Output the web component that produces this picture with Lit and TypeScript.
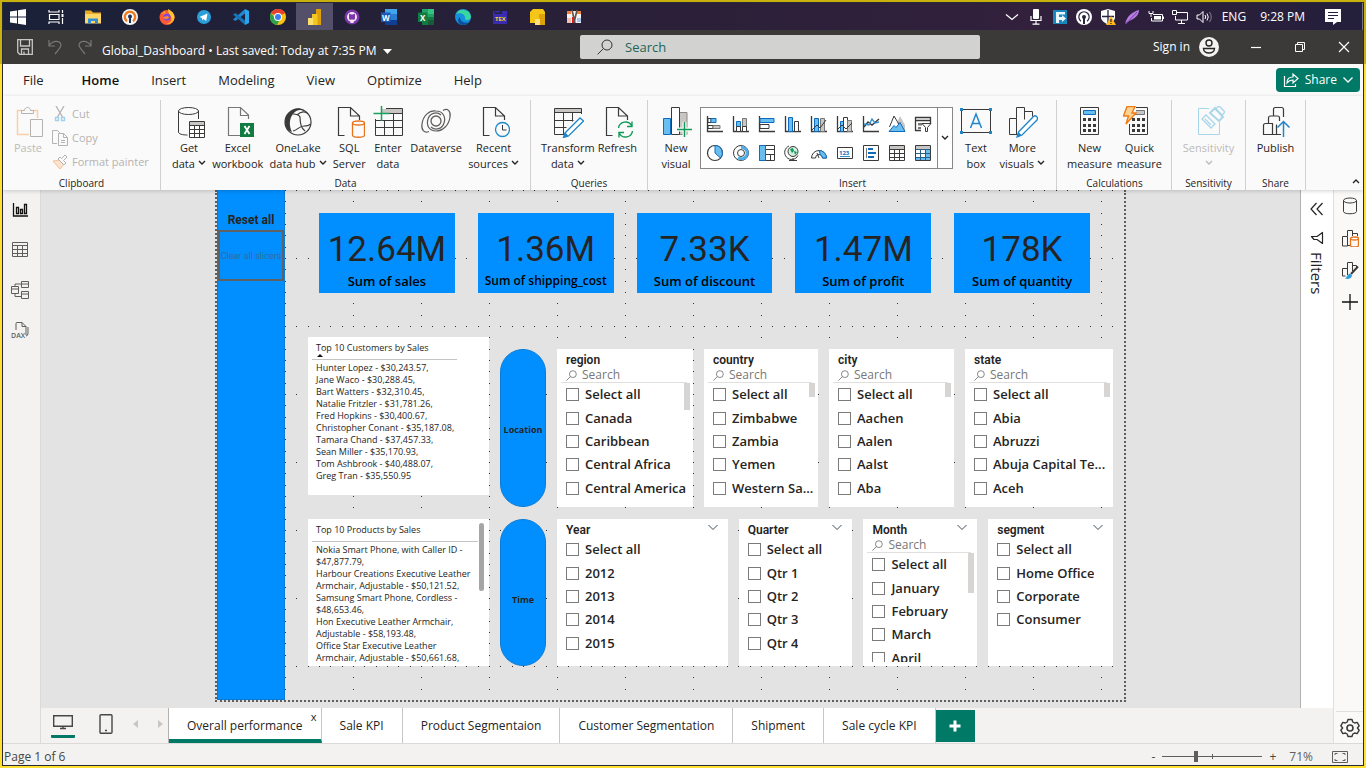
import { LitElement, html, svg, css, nothing } from "lit";
import { customElement, property } from "lit/decorators.js";
import { classMap } from "lit/directives/class-map.js";

const icon = (size: number, body: unknown) =>
  html`<svg width=${size} height=${size} viewBox="0 0 ${size} ${size}" fill="none" aria-hidden="true">${body}</svg>`;

const K = "#3b3a39";
const G = "#797775";
const B = "#1f86c9";

/* Shared shapes */
const chevron = html`<svg width="8" height="6" viewBox="0 0 8 6" fill="none" aria-hidden="true"><path d="M1 1l3 3 3-3" stroke="currentColor" stroke-width="1.4"/></svg>`;
const magnifier = (s: number) => html`<svg width=${s} height=${s} viewBox="0 0 16 16" fill="none" aria-hidden="true"><circle cx="10" cy="6" r="5" stroke="currentColor"/><path d="M6.4 9.6L.6 15.4" stroke="currentColor"/></svg>`;
const sheet = svg`<path d="M11.500 29.500H5.500V1.500H17.500L26.500 10V14M17.500 1.500V10H26.500" stroke=${K} stroke-width="1.2"/>`;

/* Taskbar */
const taskIcons = [
  { name: "Task View", art: svg`<path d="M1 1v2h10V1M1 15v-2h10v2M1.500 5.500h9.500v5H1.500zM14.500 1v3M14.500 9v6" stroke="#fff" stroke-width="1.2"/><path d="M13.500 5h2v3h-2z" fill="#fff"/>` },
  { name: "File Explorer", art: svg`<path d="M0 1.500h6l2 2h8V14H0z" fill="#e9a825"/><path d="M0 5h16v9.500H0z" fill="#ffd767"/><path d="M3 14.500V9.500h10v5h-3V12H6v2.500z" fill="#2f8fd8"/>` },
  { name: "OpenVPN", art: svg`<circle cx="8" cy="8" r="8" fill="#f5f5f5"/><path d="M5 12.200A5.200 5.200 0 1 1 11 12.200" stroke="#ee7d22" stroke-width="2.400"/><circle cx="8" cy="7.500" r="2" fill="#1d3159"/><path d="M7 8h2v6H7z" fill="#1d3159"/>` },
  { name: "Firefox", art: svg`<circle cx="8" cy="8.500" r="7.500" fill="#ff5a36"/><path d="M9 0c4 2 7 5 6.500 9-1 4-4 6-8 6 4-1 5-3 5-5 0-3-2-4-3-6z" fill="#ffc42e"/><path d="M1 4l2 1 2-3 3 3z" fill="#ff9a2c"/><circle cx="8" cy="8" r="3.500" fill="#7a4be0"/><path d="M4 8c2 0 3-1 5-1l1 2c-2 1-4 2-6-1z" fill="#ff8a2a"/>` },
  { name: "Telegram", art: svg`<circle cx="8" cy="8" r="7" fill="#29a0dc"/><path d="M3.500 8l8-3.500-1.300 7.500-2.700-2-1.300 1.300-.3-2.300z" fill="#fff"/>` },
  { name: "VS Code", art: svg`<path d="M12 0l4 2v12l-4 2z" fill="#2ba4ee"/><path d="M12 0v4.500L2.500 12 0 10.500z" fill="#1f86cf"/><path d="M12 16v-4.500L2.500 4 0 5.500z" fill="#1673b8"/>` },
  { name: "Chrome", art: svg`<circle cx="8" cy="8" r="8" fill="#fbbf12"/><path d="M8 8L1 4a8 8 0 0 1 14 0z" fill="#e6402f"/><path d="M1 4a8 8 0 0 0 6 12l3.500-6.500L5 9z" fill="#2da34c"/><circle cx="8" cy="8" r="4" fill="#fff"/><circle cx="8" cy="8" r="3" fill="#3a7ff0"/>` },
  { name: "Power BI", active: true, art: svg`<path d="M9 0h5v16H9z" fill="#e0a008"/><path d="M5 5h5.500v11H5z" fill="#f3c623"/><path d="M1 9h5v7H1z" fill="#fbdf6a"/>` },
  { name: "GitHub Desktop", art: svg`<circle cx="8" cy="8" r="7.500" fill="#7d35a8"/><circle cx="8" cy="8" r="5" fill="#f1e8f6"/><path d="M5 4.500l2 1h2l2-1v5c0 2-6 2-6 0z" fill="#7d35a8"/><path d="M6.500 10.500h3V14h-3z" fill="#f1e8f6"/>` },
  { name: "Word", art: svg`<path d="M4 0h12v16H4z" fill="#2b7cd3"/><path d="M4 0h12v5H4z" fill="#41a5ee"/><path d="M4 11h12v5H4z" fill="#103f91"/><path d="M0 3.500h9.500v9.500H0z" fill="#185abd"/><text x="1" y="11.500" font-size="8" font-weight="700" fill="#fff">W</text>` },
  { name: "Excel", art: svg`<path d="M4 0h12v16H4z" fill="#21a366"/><path d="M10 0h6v5h-6z" fill="#33c481"/><path d="M4 8h12v8H4z" fill="#107c41"/><path d="M10 11h6v5h-6z" fill="#185c37"/><path d="M0 3.500h9.500v9.500H0z" fill="#107c41"/><text x="2" y="11.500" font-size="8" font-weight="700" fill="#fff">X</text>` },
  { name: "Edge", art: svg`<circle cx="8" cy="8" r="8" fill="#1391dc"/><path d="M1 5a8 8 0 0 1 15 3c0 3-5 4-6 2 1-5-5-7-9-5z" fill="#3bd5a0"/><path d="M5 8c0 5 5 6.500 9 5a8 8 0 0 1-6 3C4 16 1 11 5 8z" fill="#0a4fa0"/>` },
  { name: "TeX", art: svg`<path d="M1 2h14v13H1z" fill="#3b2bb0"/><path d="M2 2l4 2 4-3v4H3z" fill="#20263a"/><text x="3" y="12" font-size="6" font-weight="700" fill="#f0d030">TEX</text>` },
  { name: "Report builder", art: svg`<path d="M4 0h10l2 3v11H1V3z" fill="#f5c518"/><path d="M10 5h6v11h-6z" fill="#dca20a"/><path d="M6 10h5v6H6z" fill="#ffe07a"/>` },
  { name: "Monitor", art: svg`<path d="M1 2h14v12H1z" fill="#f4f4f4"/><path d="M1 2h4v3H1z" fill="#ef7f3a"/><path d="M1 9h4v5H1z" fill="#f0c0b0"/><path d="M11 2h4v3h-4z" fill="#ef7f3a"/><path d="M11 9h4v4h-4z" fill="#a9c6ea"/><path d="M6 1l3 13M11 1L8 14" stroke="#5b5148" stroke-width="1.600"/><path d="M7 8v6" stroke="#e02020" stroke-width="2"/>` },
];

const trayIcons = [
  { name: "Show hidden icons", art: svg`<path d="M2 5.500l6 5 6-5" stroke="#fff" stroke-width="1.300"/>` },
  { name: "Microphone", art: svg`<rect x="5" y="0" width="6" height="10" rx="1" fill="#fff"/><path d="M3 7v4.500h10V7M8 11.500V15M4.500 15.200h7" stroke="#fff" stroke-width="1.200"/>` },
  { name: "Sync", art: svg`<path d="M1 1h14v14H1z" fill="#1787bd"/><path d="M4 3h9v2.500H7V8h3V6l4 3.500-4 3.500v-2H7v3H4z" fill="#e9f6fb"/>` },
  { name: "VPN", art: svg`<circle cx="8" cy="8" r="8" fill="#fff"/><path d="M5 12.200A5.200 5.200 0 1 1 11 12.200" stroke="#2a2340" stroke-width="1.200"/><circle cx="8" cy="8" r="2" fill="#2a2340"/><path d="M7 8.500h2V15H7z" fill="#2a2340"/>` },
  { name: "Security", art: svg`<path d="M8 0l7 2v6c0 4-4 6-7 7.500C5 14 1 12 1 8V2z" fill="#fff"/><path d="M8 1v13M2 7.500h12" stroke="#2a2340" stroke-width="1.300"/><path d="M11 7l5 9H6z" fill="#ffb71b"/><path d="M11 10v3M11 14v1" stroke="#2a2340" stroke-width="1.200"/>` },
  { name: "Feather", art: svg`<path d="M1 15C3 7 8 3 15 1c0 5-4 9-12 12z" fill="#b57be0"/><path d="M2 15L13 3" stroke="#7341a8"/>` },
  { name: "Battery", art: svg`<path d="M5 5.500h9.500v6.500H3.500V9" stroke="#fff"/><path d="M6 7h7v3.500H6zM15 7.500h1V10h-1z" fill="#fff"/><path d="M1 2v2.500h4V2M3 4.500V8" stroke="#fff"/>` },
  { name: "Network", art: svg`<path d="M5 3.500h10.500v7.500H3.500V7M9.500 11v3.500M6 14.500h7" stroke="#fff"/><path d="M.5 1.500h4v4h-4z" stroke="#fff"/>` },
  { name: "Volume", art: svg`<path d="M1 6h2.500L7 2.500v11L3.500 10H1z" stroke="#fff"/><path d="M9 6q1.500 2 0 4M11 4.500q2.500 3.500 0 7" stroke="#fff"/><path d="M13.500 3q3.500 5 0 10" stroke="#8a8296"/>` },
];

/* Ribbon artwork, drawn on 32px squares */
const art = {
  paste: svg`<path d="M25.500 12V4.500H21M10 4.500H5.500V28.500H17" stroke="#f7cfa8" stroke-width="1.500"/><path d="M9.500 7.500v-3h3c0-4 6-4 6 0h3v3z" stroke="#b5b3b1"/><path d="M18.500 13.500h12v17h-12z" fill="#fafafa" stroke="#b5b3b1"/>`,
  getData: svg`<ellipse cx="15.500" cy="5" rx="10" ry="3.500" stroke=${K}/><path d="M5.500 5v21c0 2 4 3 9 3M25.500 5v8" stroke=${K}/><path d="M16.500 15.500h15v16h-15z" fill="#fff" stroke=${K}/><path d="M17 16h14v3H17z" fill="#c8c6c4"/><path d="M16.500 19.500h15M16.500 23.500h15M16.500 27.500h15M21.500 19.500v12M26.500 19.500v12" stroke=${K}/>`,
  excel: svg`<path d="M26.500 13V9L18.500 1.500H6.500v28h12M18.500 1.500V9.500h8" stroke=${G} stroke-width="1.200"/><path d="M18 17h14v14H18z" fill="#107c41"/><path d="M22.500 20l5 8M27.500 20l-5 8" stroke="#fff" stroke-width="1.800"/>`,
  onelake: svg`<circle cx="16" cy="16" r="13" stroke=${K} stroke-width="1.200"/><path d="M10 4.500C13 1.500 20 1.500 23 5c-5-2-9-1-12 3-4 5-4 12-1 18C3 24 1 16 5 9c1-2 3-3 5-4.500z" fill=${K}/><path d="M11 8c3 0 6 1 7 3 0 8 2 12 5 14M15 9c4-4 9-4 11-1M11 25c5-1 6-5 11-5 3 0 5 0 6-2" stroke=${K} stroke-width="1.200"/>`,
  sql: svg`${sheet}<path d="M17 15v15h15V15z" fill="#fafafa"/><ellipse cx="25.500" cy="17" rx="6" ry="2" stroke="#e8731c" stroke-width="1.300"/><path d="M19.500 17v12c0 3 12 3 12 0V17" stroke="#e8731c" stroke-width="1.300"/>`,
  enter: svg`<path d="M10 3h20v4H10z" fill="#c8c6c4"/><path d="M14 2.500h16.500v27h-27V13M14 7.500h16M3.500 14.500h27M3.500 21.500h27M12.500 14v15M21.500 7v22" stroke=${K}/><path d="M9.500 0v15M1.500 7.500h16" stroke="#17a15c" stroke-width="1.500"/>`,
  dataverse: svg`<path d="M23 4.500c5-3 8 1 7 6.500-1 8-7 14-14 14-7 0-10-6-8-12" stroke="#605e5c" stroke-width="1.200"/><path d="M9 25.500c-5 2-8-2-7-7.500 1-8 7-14 14-13 7 0 10 6 8 12" stroke="#605e5c" stroke-width="1.200"/><path d="M24 17a8 8 0 0 1-13 4M8 13a8 8 0 0 1 13-4" stroke="#605e5c" stroke-width="1.200"/><circle cx="16" cy="15" r="5" stroke="#605e5c" stroke-width="1.300"/>`,
  recent: svg`${sheet}<circle cx="24.500" cy="23.500" r="7" fill="#fafafa" stroke=${B} stroke-width="1.300"/><path d="M24.500 19v5h4" stroke=${K}/>`,
  transform: svg`<path d="M2 3h27v3H2z" fill="#c8c6c4"/><path d="M29.500 8V2.500h-27v26H12M2.500 6.500h27M2.500 14.500h19M2.500 21.500h12M11.500 6.500v22M20.500 6.500v9" stroke=${K}/><path d="M13 27l15-15 3.500 3-15 15-5 1.500z" fill="#fff" stroke=${B} stroke-width="1.300"/><path d="M13 26l3.500 4-5 1.500z" fill=${B}/>`,
  refresh: svg`${sheet}<path d="M16 16h16v16H16z" fill="#fafafa"/><path d="M17.500 22a7 7 0 0 1 13-2.500M31 15.500v5h-5M31.500 25a7 7 0 0 1-13 2.500M18 31.500v-5h5" stroke="#109a58" stroke-width="1.400"/>`,
  newVisual: svg`<path d="M3.500 12.500h7v16h-7z" fill="#69bef0" stroke="#0f6cbd"/><path d="M19 6.500h8v22h-8z" fill="#c8c6c4" stroke="#8a8886"/><path d="M11.500 1.500h8v27h-8z" fill="#fff" stroke=${K}/><path d="M24.500 16v15M17 23.500h15" stroke="#fafafa" stroke-width="4"/><path d="M24.500 16v15M17 23.500h15" stroke="#109a58" stroke-width="1.500"/>`,
  textBox: svg`<path d="M1.500 3.500h29v23h-29z" stroke=${K}/><path d="M0 2h3v3H0zM29 2h3v3h-3zM0 25h3v3H0zM29 25h3v3h-3z" fill=${B}/><path d="M10.500 22L16 8l5.500 14M12.500 17.500h7" stroke=${B} stroke-width="1.500"/>`,
  moreVisuals: svg`<path d="M3.500 28.500v-16h7v-11h8v12M10.500 12.500v16M3.500 28.500h9M18.500 5.500h8v5" stroke=${K}/><path d="M12.500 26l15-15.500c2-2 5 1 3.500 3.500L16 29l-5 2z" fill="#fff" stroke=${B} stroke-width="1.300"/><path d="M12.500 26l3.500 3.500-5 1.500z" fill=${B}/>`,
  calc: svg`<path d="M6.500 1.500h18v27h-18z" stroke=${K}/><path d="M9.500 4.500h12v4h-12z" fill="#69bef0" stroke="#0f6cbd"/><path d="M9 13.500h3m2 0h3m2 0h3M9 19.500h3m2 0h3m2 0h3M9 24.500h3m2 0h3m2 0h3" stroke=${K} stroke-width="3"/>`,
  quick: svg`<path d="M13 1.500h11.500v27H6.500V18" stroke=${K}/><path d="M13 4.500h8.500v4H12" stroke=${G} fill="#c8c6c4"/><path d="M9 13.500h3m2 0h3m2 0h3M9 19.500h3m2 0h3m2 0h3M9 24.500h3m2 0h3m2 0h3" stroke=${K} stroke-width="3"/><path d="M4 .5h8L9 7h4L3 18l2.500-8H.500z" fill="#ffd394" stroke="#ef7b16" stroke-width="1.400"/>`,
  sensitivity: svg`<path d="M16 2.500H5.500v26h21V16" stroke="#a9d6ea"/><path d="M9 13l4-4 9 9-4 4zM12 13l6 6" stroke="#a9d6ea" stroke-width="1.300"/><path d="M17 7l5-5 8 9-4 4z" stroke="#a9d6ea" stroke-width="2"/><path d="M22 3l4-3 6 6-3 3z" stroke="#a9d6ea" stroke-width="1.300"/>`,
  publish: svg`<path d="M4.500 28.500v-9q0-2 2-2h7v11zM13.500 28.500h4v-10M9.500 17v-5q0-2 2-2h7q2 0 2 2v3M14.500 10V3.500q0-2 2-2h6q2 0 2 2V11M18 28.500h4" stroke=${K} stroke-width="1.200"/><path d="M24.500 31V16M18.500 21.500l6-6 6 6" stroke=${B} stroke-width="1.500"/>`,
};

const axes = svg`<path d="M1.500 1v15.500H17" stroke=${K} stroke-width="1.300"/>`;
const gallery = [
  { name: "Stacked bar chart", art: svg`${axes}<path d="M2 3.500h3v4H2z" fill="#fff" stroke=${K}/><path d="M5 3.500h5v4H5z" fill="#69bef0" stroke="#0f6cbd"/><path d="M2 10.500h5v3H2z" stroke=${K}/><path d="M7 10.500h7v3H7z" fill="#c8c6c4" stroke=${G}/>` },
  { name: "Stacked column chart", art: svg`${axes}<path d="M4.500 6.500h4v9h-4z" fill="#69bef0" stroke="#0f6cbd"/><path d="M10.500 3.500h4v12h-4z" fill="#c8c6c4" stroke=${G}/><path d="M4.500 11.500h4v5h-4zM10.500 11.500h4v5h-4z" fill="#fff" stroke=${K}/>` },
  { name: "Clustered bar chart", art: svg`${axes}<path d="M2 3.500h14v4H2z" fill="#69bef0" stroke="#0f6cbd"/><path d="M2 9.500h9v4H2z" fill="#fff" stroke=${K}/>` },
  { name: "Clustered column chart", art: svg`${axes}<path d="M4.500 2.500h4v14h-4z" fill="#69bef0" stroke="#0f6cbd"/><path d="M10.500 6.500h4v10h-4z" fill="#fff" stroke=${K}/>` },
  { name: "Line and stacked column chart", art: svg`${axes}<path d="M4.500 3.500h4v13h-4z" fill="#69bef0" stroke="#0f6cbd"/><path d="M10.500 3.500h4v13h-4z" fill="#c8c6c4" stroke=${G}/><path d="M2 15l5-5 3 3 6-8" stroke=${K}/>` },
  { name: "Line and clustered column chart", art: svg`${axes}<path d="M4.500 6.500h3v10h-3z" fill="#69bef0" stroke="#0f6cbd"/><path d="M7.500 2.500h4v14h-4z" fill="#fff" stroke=${K}/><path d="M11.500 5.500h4v11h-4z" fill="#c8c6c4" stroke=${G}/><path d="M2 14l4-4 4 4 6-6" stroke=${K}/>` },
  { name: "Line chart", art: svg`${axes}<path d="M2 12l4-5 4 3 7-6" stroke=${K} stroke-width="1.400"/><path d="M2 9l5 1 3-6 3 4 4-1" stroke="#2f8fd0" stroke-width="1.400"/>` },
  { name: "Area chart", art: svg`<path d="M9 8l3-7 5 9v6h-3z" fill="#c8c6c4"/><path d="M1.500 12L6 1l6 10" stroke=${K}/><path d="M1 16.500l5-6 2 2 4-5 5 9z" fill="#69bef0" stroke="#0f6cbd"/>` },
  { name: "Slicer", art: svg`<path d="M7 15.500H1.500v-13h15V8M1.500 5.500h15" stroke=${K} stroke-width="1.300"/><path d="M4 8h4v2.500H4zM4 12h3v2H4z" fill=${G}/><path d="M8 8.500h9l-3.500 4v4h-2v-4z" fill="#fff" stroke=${K}/>` },
  { name: "Pie chart", art: svg`<circle cx="9" cy="9" r="7.500" stroke=${K} stroke-width="1.200"/><path d="M9 9V1.500A7.500 7.500 0 0 1 14.500 14z" fill="#69bef0" stroke="#0f6cbd"/>` },
  { name: "Donut chart", art: svg`<circle cx="9" cy="9" r="7.500" stroke=${K}/><path d="M9 3.200a5.800 5.800 0 1 1-3 10.500" stroke="#4faee8" stroke-width="3"/><circle cx="9" cy="9" r="3.500" fill="#fff" stroke=${K}/>` },
  { name: "Treemap", art: svg`<path d="M1.500 1.500h15v15h-15z" fill="#fff" stroke=${K}/><path d="M1.500 1.500h6v15h-6z" fill="#69bef0" stroke="#0f6cbd"/><path d="M8 5.500h8M8 10.500h8M12.500 10v6" stroke=${K}/>` },
  { name: "Map", art: svg`<circle cx="9" cy="7.500" r="5" fill="#d6efe2" stroke=${K}/><path d="M6 5l3-1 1 3-2 2zM10 7l3 1-2 3z" fill="#109a58"/><path d="M5 2a7 7 0 1 0 9 9.500M9 14v2.500M5 16.500h8" stroke=${K}/>` },
  { name: "Gauge", art: svg`<path d="M1.500 14a7.500 7.500 0 0 1 15 0h-4a3.500 3.500 0 0 0-7 0z" fill="#fff" stroke=${K}/><path d="M9 6.500a7.500 7.500 0 0 1 7.500 7.500h-4a3.500 3.500 0 0 0-2-3z" fill="#69bef0" stroke="#0f6cbd"/><path d="M7 9l2 5" stroke=${K}/>` },
  { name: "Card", art: svg`<path d="M1.500 3.500h15v11h-15z" stroke=${K}/><path d="M4 12.500h10" stroke="#2f8fd0"/><text x="3" y="10.500" font-size="6" font-weight="700" fill="#0f6cbd">123</text>` },
  { name: "Multi-row card", art: svg`<path d="M1.500 1.500h15v15h-15z" stroke=${K}/><path d="M4.500 4v10" stroke=${G}/><path d="M6 5h5M6 9h8M6 13h6" stroke="#0f6cbd" stroke-width="2"/>` },
  { name: "Table", art: svg`<path d="M1.500 1.500h15v15h-15z" stroke=${K}/><path d="M2 2h14v3H2z" fill="#c8c6c4"/><path d="M1.500 5.500h15M1.500 9.500h15M1.500 13.500h15M6.500 5v11M11.500 5v11" stroke=${K}/>` },
  { name: "Matrix", art: svg`<path d="M1.500 1.500h15v15h-15z" stroke=${K}/><path d="M2 2h14v3H2z" fill="#c8c6c4"/><path d="M12 5h4v11h-4zM2 13h10v3H2z" fill="#69bef0"/><path d="M1.500 5.500h15M1.500 9.500h15M1.500 13.500h15M6.500 5v11M11.500 5v11" stroke="#2a5f85"/>` },
];

const railViews = [
  { name: "Report view", art: svg`<path d="M2.500 2v13H17M5.500 12.500v-6h2v6zM9.500 12.500v-4h2v4zM13.500 12.500v-9h2v9z" stroke="#111" stroke-width="1.300"/>` },
  { name: "Table view", art: svg`<path d="M1.500 1.500h15v14H1.500zM1.500 4.500h15M1.500 8.500h15M1.500 12.500h15M6.500 4.500v11M11.500 4.500v11" stroke="#605e5c"/>` },
  { name: "Model view", art: svg`<path d="M.5 5.500h7v7h-7zM.5 8h7M10.500 .5h7v6h-7zM10.500 3h7M10.500 10.500h7v7h-7zM10.500 13h7M4 5V3h6M4 13v2.500h6" stroke="#605e5c"/>` },
  { name: "DAX query view", art: svg`<path d="M5 9V2.500q0-1 1-1h5l4 4V14M11 1.500v4h4M17 6v6q0 3-2 3" stroke="#605e5c"/><text x="0" y="17" font-size="7" font-weight="600" fill="#605e5c">DAX</text>` },
];

const paneIcons = [
  { name: "Data", art: svg`<ellipse cx="9" cy="3.500" rx="6.500" ry="2.500" stroke=${K}/><path d="M2.500 3.500v11c0 3 13 3 13 0v-11" stroke=${K}/>` },
  { name: "Build visual", art: svg`<path d="M1.500 17V7.500h5V17zM6.500 7.500v-6h5V7M6.500 16.500h3M11.500 4.500h5V7" stroke=${K}/><ellipse cx="13.500" cy="9.500" rx="4" ry="1.500" fill="#fff" stroke="#e8731c" stroke-width="1.300"/><path d="M9.500 9.500v7c0 2 8 2 8 0v-7" stroke="#e8731c" stroke-width="1.300"/>` },
  { name: "Format visual", art: svg`<path d="M1.500 15V7.500h5M6.500 14v-12.500h5V10M11.500 4.500h4V6M1.500 15h3" stroke=${K}/><path d="M17 5.500L10 13" stroke=${K} stroke-width="2"/><path d="M4 17.500c2-1 2-4 5-5l2 2c0 3-4 4-7 3z" fill="#2f9fe0"/>` },
  { name: "Add pane", art: svg`<path d="M9 1v16M1 9h16" stroke="#111" stroke-width="1.300"/>` },
];

interface RibbonItem { lines: string[]; art: unknown; menu?: boolean; disabled?: boolean; }

const dataItems: RibbonItem[] = [
  { lines: ["Get", "data"], art: art.getData, menu: true },
  { lines: ["Excel", "workbook"], art: art.excel },
  { lines: ["OneLake", "data hub"], art: art.onelake, menu: true },
  { lines: ["SQL", "Server"], art: art.sql },
  { lines: ["Enter", "data"], art: art.enter },
  { lines: ["Dataverse"], art: art.dataverse },
  { lines: ["Recent", "sources"], art: art.recent, menu: true },
];
const queryItems: RibbonItem[] = [
  { lines: ["Transform", "data"], art: art.transform, menu: true },
  { lines: ["Refresh"], art: art.refresh },
];

const kpis = [
  ["12.64M", "Sum of sales"],
  ["1.36M", "Sum of shipping_cost"],
  ["7.33K", "Sum of discount"],
  ["1.47M", "Sum of profit"],
  ["178K", "Sum of quantity"],
];

const customers = [
  "Hunter Lopez - $30,243.57,", "Jane Waco - $30,288.45,", "Bart Watters - $32,310.45,",
  "Natalie Fritzler - $31,781.26,", "Fred Hopkins - $30,400.67,", "Christopher Conant - $35,187.08,",
  "Tamara Chand - $37,457.33,", "Sean Miller - $35,170.93,", "Tom Ashbrook - $40,488.07,",
  "Greg Tran - $35,550.95",
];
const products = [
  "Nokia Smart Phone, with Caller ID -", "$47,877.79,", "Harbour Creations Executive Leather",
  "Armchair, Adjustable - $50,121.52,", "Samsung Smart Phone, Cordless -", "$48,653.46,",
  "Hon Executive Leather Armchair,", "Adjustable - $58,193.48,", "Office Star Executive Leather",
  "Armchair, Adjustable - $50,661.68,",
];

const pageTabs = ["Overall performance", "Sale KPI", "Product Segmentaion", "Customer Segmentation", "Shipment", "Sale cycle KPI"];

@customElement("report-slicer")
export class ReportSlicer extends LitElement {
  @property() heading = "";
  @property({ type: Array }) values: string[] = [];
  @property({ type: Boolean }) searchable = false;
  @property({ type: Boolean }) collapsible = false;
  @property() thumb = "";

  static styles = css`
    :host { display: block; background: #fff; color: #252423; padding: 3px 3px 4px 4px; box-sizing: border-box; min-width: 0; overflow: hidden; }
    .card { display: flex; flex-direction: column; height: 100%; }
    .head { display: flex; justify-content: space-between; align-items: flex-start; height: 16px; padding: 0 7px 0 5px; }
    h3 { margin: 0; font: 600 12px/16px Roboto, "Open Sans", sans-serif; }
    .fold { border: 0; padding: 2px 0; margin: 0; background: none; color: #3c4a5a; height: 12px; display: flex; }
    .search { display: flex; align-items: center; gap: 5px; height: 14px; margin-right: 3px; padding-left: 5px; border-bottom: 1px solid #e1dfdd; color: #555; }
    .search svg { flex: none; }
    input[type="search"] { min-width: 0; flex: 1; border: 0; padding: 0; height: 14px; background: none; outline: none; font: 12px/14px "Open Sans", sans-serif; color: #252423; }
    input::placeholder { color: #7a7876; opacity: 1; }
    .body { flex: 1; min-height: 0; overflow: hidden; display: flex; }
    ul { flex: 1; min-width: 0; list-style: none; margin: 0; padding: 0 0 0 5px; height: 117px; display: grid; grid-template: repeat(5, 1fr) / minmax(0, 1fr); }
    label { display: flex; align-items: center; gap: 6px; height: 100%; font: 600 13px/18px "Open Sans", sans-serif; }
    label span { min-width: 0; padding-bottom: 1px; white-space: nowrap; overflow: hidden; text-overflow: ellipsis; }
    input[type="checkbox"] { appearance: none; flex: none; width: 13px; height: 13px; margin: 0; border: 1px solid #7d7b79; background: #fff; }
    .thumb { width: 6px; margin-left: -6px; height: 14px; background: #d6d5d4; flex: none; }
    .thumb.mid { height: 27px; }
    .thumb.long { height: 40px; }
  `;

  render() {
    return html`<section class="card">
      <div class="head">
        <h3>${this.heading}</h3>
        ${this.collapsible
          ? html`<button class="fold" aria-label="Collapse ${this.heading}"><svg width="10" height="7" viewBox="0 0 10 7" fill="none"><path d="M.5 1L5 5.500 9.500 1" stroke="currentColor"/></svg></button>`
          : nothing}
      </div>
      ${this.searchable
        ? html`<div class="search">${magnifier(11)}<input type="search" aria-label="Search ${this.heading}" placeholder="Search" /></div>`
        : nothing}
      <div class="body">
        <ul>${this.values.map((v) => html`<li><label><input type="checkbox" /><span>${v}</span></label></li>`)}</ul>
        ${this.thumb ? html`<div class=${classMap({ thumb: true, [this.thumb]: true })}></div>` : nothing}
      </div>
    </section>`;
  }
}

@customElement("app-root")
export class AppRoot extends LitElement {
  static styles = css`
    :host {
      display: block; box-sizing: border-box; height: 100vh; min-height: 600px; padding: 2px;
      background: linear-gradient(#c8b00f 64px, #ffe033 64px);
      font: 12px/16px "Open Sans", "Noto Sans", sans-serif; color: #252423;
    }
    button { font: inherit; color: inherit; border: 0; background: none; padding: 0; margin: 0; }
    svg { display: block; flex: none; }
    .window { box-sizing: border-box; height: 100%; border: 1px solid #2b2a33; display: flex; flex-direction: column; overflow: hidden; background: #fafafa; }

    .taskbar { height: 27px; flex: none; display: flex; justify-content: space-between; background: linear-gradient(90deg, #1a2138, #2a2038 45%, #32203c 75%, #241f3b); color: #fff; }
    .apps, .tray { display: flex; align-items: stretch; }
    .apps button { width: 37px; display: grid; place-items: center; }
    .apps .start { width: 30px; margin-right: 4px; }
    .apps .active { background: #54506a; }
    .tray { border-right: 1px solid #77728a; }
    .tray button { width: 24px; display: grid; place-items: center; }
    .tray .lang, .tray .clock { width: auto; padding-left: 6px; }
    .tray .clock { padding: 0 11px 0 14px; }
    .tray .note { width: 34px; margin-right: 12px; }

    .titlebar { height: 34px; flex: none; background: #3b3a39; color: #fff; display: grid; grid-template-columns: minmax(0, 577fr) 400px minmax(0, 383fr); align-items: center; }
    .quick { display: flex; align-items: center; gap: 14px; padding-left: 14px; white-space: nowrap; color: #fff; }
    .quick .off { color: #797775; }
    .quick .doc { display: flex; align-items: center; gap: 6px; padding-top: 8px; margin-left: -5px; }
    .find { display: flex; align-items: center; gap: 12px; height: 24px; padding-left: 17px; background: #d2d2d0; border-radius: 2px; color: #333; }
    .find input { flex: 1; min-width: 0; border: 0; padding: 0; background: none; outline: none; font: 13px/20px "Open Sans", sans-serif; }
    .find input::placeholder { color: #1f6657; opacity: 1; }
    .account { display: flex; align-items: center; justify-content: flex-end; padding-right: 10px; }
    .account .sign { display: flex; align-items: center; gap: 9px; margin-right: 28px; }
    .account .win { width: 18px; height: 18px; display: grid; place-items: center; margin-left: 26px; }
    .account .sign + .win { margin-left: 0; }

    .menu { height: 32px; flex: none; display: flex; align-items: center; justify-content: space-between; padding: 0 3px 0 20px; }
    .menu nav { display: flex; gap: 32px; font-size: 13px; }
    .menu a { color: #252423; text-decoration: none; }
    .menu .current { font-weight: 600; color: #111; margin-left: 6px; }
    .share { display: flex; align-items: center; gap: 6px; height: 24px; padding: 0 7px; border-radius: 4px; background: #007a66; color: #fff; }

    .ribbon { height: 94px; flex: none; display: flex; box-shadow: 0 1px 4px #0000002e; z-index: 1; box-sizing: border-box; padding-top: 4px; font-size: 11px; }
    .group { box-sizing: border-box; height: 90px; border-right: 1px solid #d2d0ce; padding: 6px 4px 0; display: flex; flex-direction: column; justify-content: space-between; white-space: nowrap; }
    .group h2 { margin: 0; font: 10px/14px "Open Sans", sans-serif; text-align: center; }
    .tools { display: flex; justify-content: space-between; }
    .clip { width: 158px; }
    .data { width: 370px; padding-left: 11px; padding-right: 11px; }
    .queries { width: 117px; padding-left: 10px; padding-right: 10px; }
    .insert { width: 409px; padding-left: 12px; padding-right: 11px; }
    .calcs { width: 115px; padding-left: 10px; padding-right: 9px; }
    .sens { width: 74px; }
    .sens .tools, .pub .tools { justify-content: center; }
    .pub { width: 60px; }
    .tool { display: flex; flex-direction: column; align-items: center; height: 66px; }
    .tool svg:first-child { margin-bottom: 2px; }
    .tool .line { display: flex; align-items: center; gap: 3px; height: 16px; }
    .tool.off { color: #bdbbb9; }
    .clip .tools { justify-content: flex-start; gap: 8px; padding-left: 5px; }
    .clip ul { list-style: none; margin: 0; padding: 0; display: flex; flex-direction: column; gap: 8px; color: #b5b3b1; }
    .clip li button { display: flex; align-items: center; gap: 4px; height: 16px; }
    .gallery { display: flex; height: 60px; margin-top: 1px; border: 1px solid #8a8886; background: #fff; }
    .shelf { display: grid; grid-template-columns: repeat(9, 26px); padding: 1px 1px 1px; }
    .shelf button, .gallery .more { display: grid; place-items: center; }
    .gallery .more { width: 15px; border-left: 1px solid #8a8886; }
    .collapse { margin: auto 3px 6px auto; transform: rotate(180deg); }

    .workspace { flex: 1; min-height: 0; display: grid; grid-template: minmax(0, 1fr) 35px / 38px minmax(0, 1fr) 33px 30px; }
    .views { grid-row: 1 / 3; background: #f3f2f1; border-right: 1px solid #dcdad8; display: flex; flex-direction: column; align-items: center; gap: 22px; padding: 11px 3px 0 0; }
    .views button, .panes button { display: block; }
    .stage { background: #e3e3e3; overflow: hidden; display: flex; justify-content: center; }
    .report { position: relative; width: 911px; box-sizing: border-box; border: 2px dotted #5f5e5d; border-top: 0; display: flex; height: 512px; }
    .dots { position: absolute; inset: 0; width: 100%; height: 100%; }
    .side { position: relative; flex: none; background: #018fff; border: 1px solid #0a7bd6; border-top: 0; box-sizing: border-box; width: 68px; text-align: center; }
    .side h3 { margin: 22px 0 2px; font: 700 12px/16px Roboto, sans-serif; }
    .clear { display: flex; align-items: center; justify-content: center; box-sizing: border-box; width: 100%; height: 51px; border: 2px solid #5f6163; color: #3a6a9c; font: 9px/12px Roboto, "Open Sans", sans-serif; white-space: nowrap; }
    .sheet { position: relative; flex: 1; min-width: 0; padding: 23px 11px 0 23px; display: flex; flex-direction: column; gap: 44px; }
    .kpis { display: grid; grid-template-columns: repeat(5, minmax(0, 1fr)); gap: 23px; padding: 0 23px 0 11px; }
    .kpi { height: 80px; background: #018fff; text-align: center; white-space: nowrap; }
    .kpi strong { display: block; font: 400 35px/40px Roboto, sans-serif; padding-top: 17px; }
    .kpi span { display: block; font: 600 13px/16px "Open Sans", sans-serif; color: #000; margin-top: 3px; }
    .kpi .long { font-size: 12px; }
    .visuals { display: flex; gap: 11px; height: 329px; }
    .lists { width: 181px; display: flex; flex-direction: column; gap: 24px; flex: none; }
    .list { position: relative; background: #fff; flex: 0 0 158px; box-sizing: border-box; padding: 5px 4px; overflow: hidden; font: 9px/12px "Open Sans", sans-serif; }
    .list.second { flex: 1; padding-bottom: 0; }
    .list h3 { position: relative; margin: 0 28px 2px 0; padding: 0 4px 5px; font: inherit; border-bottom: 1px solid #c6c4c2; }
    .list .asc { position: absolute; left: 5px; bottom: 2px; }
    .second h3 { margin-right: 7px; }
    .list div { padding-left: 4px; white-space: nowrap; }
    .bar { position: absolute; right: 5px; top: 4px; width: 5px; height: 68px; border-radius: 3px; background: #a6a5a4; }
    .pills, .slicers { display: flex; flex-direction: column; gap: 12px; padding-top: 12px; }
    .pills { width: 46px; flex: none; }
    .pill { flex: 0 0 158px; box-sizing: border-box; display: grid; place-items: center; padding-top: 3px; border-radius: 23px; background: #018fff; border: 1px solid #0a7bd6; font: 700 9px/12px "Open Sans", sans-serif; }
    .pill.last { flex: 1; padding-top: 15px; }
    .slicers { flex: 1; min-width: 0; }
    .row { display: grid; gap: 11px; flex: 0 0 158px; grid-template-columns: 136fr 114fr 125fr 148fr; }
    .row.time { flex: 1; min-height: 0; grid-template-columns: 171fr 114fr 114fr 125fr; }

    .filters { background: #fff; border-left: 1px solid #b3b0ad; display: flex; flex-direction: column; align-items: center; gap: 7px; padding-top: 12px; color: #252423; }
    .filters button { margin-bottom: 8px; }
    .filters h2 { margin: 0; writing-mode: vertical-rl; font: 500 15px/18px "Open Sans", sans-serif; }
    .panes { background: #faf9f8; border-left: 1px solid #e1dfdd; grid-row: 1 / 3; grid-column: 4; display: flex; flex-direction: column; align-items: center; gap: 14px; padding: 7px 0 0 2px; }
    .panes .gear { margin-top: auto; border-top: 1px solid #e1dfdd; width: 100%; height: 32px; display: grid; place-items: center; }
    .tabs { grid-column: 2 / 4; grid-row: 2; background: #f3f2f1; display: flex; white-space: nowrap; color: #252423; }
    .layouts { display: flex; align-items: center; width: 128px; box-sizing: border-box; padding: 0 2px 4px 10px; gap: 16px; border-right: 1px solid #b3b0ad; }
    .layouts .on { border-bottom: 3px solid #007a66; height: 27px; padding: 0 2px 3px; margin: 2px 5px 0 0; border-radius: 1px; }
    .tab { position: relative; background: #fff; border-right: 1px solid #c8c6c4; padding: 0 18px; }
    .tab.on { border-bottom: 4px solid #007a66; padding-top: 4px; }
    .tab .x { position: absolute; right: 4px; top: 1px; font-size: 11px; }
    .add { width: 39px; margin: 2px 0 1px; background: #007a66; display: grid; place-items: center; }
    .status { height: 22px; flex: none; box-sizing: border-box; background: #f3f2f1; border-top: 1px solid #dcdad8; display: flex; align-items: center; justify-content: space-between; padding: 4px 15px 0 1px; color: #484644; }
    .zoom { display: flex; align-items: center; gap: 7px; }
    .zoom .pct { margin: 0 12px 0 6px; color: #605e5c; }
    .zoom input { appearance: none; width: 100px; height: 12px; margin: 0; background: linear-gradient(#605e5c, #605e5c) center / 100% 1px no-repeat, linear-gradient(#605e5c, #605e5c) 50% 50% / 1px 5px no-repeat; }
    .zoom input::-webkit-slider-thumb { appearance: none; width: 4px; height: 11px; background: #605e5c; }
  `;

  private tool(t: RibbonItem) {
    return html`<button class=${classMap({ tool: true, off: !!t.disabled })}>
      ${icon(32, t.art)}
      ${t.lines.map((l, i) => html`<span class="line">${l}${t.menu && i === t.lines.length - 1 ? chevron : nothing}</span>`)}
    </button>`;
  }

  private renderTaskbar() {
    return html`<header class="taskbar">
      <div class="apps">
        <button class="start" aria-label="Start">${icon(16, svg`<path d="M0 2.500l7-1v6H0zM8 1.300L16 0v7.500H8zM0 8.500h7v6l-7-1zM8 8.500h8V16l-8-1.300z" fill="#fff"/>`)}</button>
        ${taskIcons.map((t) => html`<button class=${t.active ? "active" : ""} aria-label=${t.name}>${icon(16, t.art)}</button>`)}
      </div>
      <div class="tray">
        ${trayIcons.map((t) => html`<button aria-label=${t.name}>${icon(16, t.art)}</button>`)}
        <button class="lang">ENG</button><button class="clock">9:28 PM</button>
        <button class="note" aria-label="Notifications">${icon(16, svg`<path d="M0 0h16v13h-4l-4 3v-3H0z" fill="#fff"/><path d="M3 3.500h10M3 6.500h10M3 9.500h6" stroke="#241f3b"/>`)}</button>
      </div>
    </header>`;
  }

  private renderTitle() {
    return html`<div class="titlebar">
      <div class="quick">
        <button aria-label="Save">${icon(16, svg`<path d="M.7 .7h14.600v14.600H2.700l-2-2zM3.500 1v6h9V1M4.500 15v-5h7v5M7 12.500V15" stroke="#c8c6c4" stroke-width="1.300"/>`)}</button>
        <button class="off" aria-label="Undo">${icon(16, svg`<path d="M2 1v6h6M2 6.500C6 1 13 1 14 6c0 2-1 3-6 9" stroke="currentColor" stroke-width="1.200"/>`)}</button>
        <button class="off" aria-label="Redo">${icon(16, svg`<path d="M14 1v6H8M14 6.500C10 1 3 1 2 6c0 2 1 3 6 9" stroke="currentColor" stroke-width="1.200"/>`)}</button>
        <button class="doc">Global_Dashboard • Last saved: Today at 7:35 PM <svg width="9" height="5" viewBox="0 0 9 5"><path d="M0 0h9L4.500 5z" fill="#fff"/></svg></button>
      </div>
      <label class="find">${magnifier(16)}<input type="search" placeholder="Search" aria-label="Search" /></label>
      <div class="account">
        <button class="sign">Sign in ${icon(20, svg`<circle cx="10" cy="10" r="10" fill="#f3f2f1"/><circle cx="10" cy="6" r="3" stroke="#252423" stroke-width="1.400"/><path d="M4.500 11.500h11c0 6-11 6-11 0z" stroke="#252423" stroke-width="1.400"/>`)}</button>
        <button class="win" aria-label="Minimize">${icon(12, svg`<path d="M1 6.500h10" stroke="#fff" stroke-width="1.200"/>`)}</button>
        <button class="win" aria-label="Restore">${icon(12, svg`<path d="M1.500 3.500h7v7h-7zM3.500 3.500V1.500h7v7h-2" stroke="#fff"/>`)}</button>
        <button class="win" aria-label="Close">${icon(12, svg`<path d="M1 1l10 10M11 1L1 11" stroke="#fff" stroke-width="1.200"/>`)}</button>
      </div>
    </div>
    <div class="menu">
      <nav>${["File", "Home", "Insert", "Modeling", "View", "Optimize", "Help"].map((m) => html`<a href="#" class=${m === "Home" ? "current" : ""}>${m}</a>`)}</nav>
      <button class="share">${icon(16, svg`<path d="M1.500 4v10.500h11V12M4 11c0-4 2-6 6-6V2l5 4.500-5 4.500V8C7 8 5.500 9 4 11z" stroke="#fff" stroke-width="1.200"/>`)}<span>Share</span><svg width="10" height="6" viewBox="0 0 10 6" fill="none"><path d="M.5 .5L5 5 9.500.5" stroke="#fff" stroke-width="1.300"/></svg></button>
    </div>`;
  }

  private renderRibbon() {
    return html`<div class="ribbon">
      <section class="group clip">
        <div class="tools">
          ${this.tool({ lines: ["Paste"], art: art.paste, disabled: true })}
          <ul>
            <li><button>${icon(16, svg`<path d="M4 0l6.500 11M12 0L5.500 11" stroke="#b5b3b1" stroke-width="1.300"/><path d="M3.500 11.500h3v3h-3zM9.500 11.500h3v3h-3z" stroke="#9fd0ea" stroke-width="1.300"/>`)}Cut</button></li>
            <li><button>${icon(16, svg`<path d="M5 13.500H.5V.500h5l2 2M6.500 15.500V3.500h5l4 4v8zM11.500 3.500v4h4M9 10.500h4M9 12.500h4" stroke="#b5b3b1"/>`)}Copy</button></li>
            <li><button>${icon(16, svg`<path d="M1 7l7-1 4 4-4 5z" fill="#fbe3d0" stroke="#f3c19a"/><path d="M6 5l6 6 2-2-2.500-2.500L15 3l-2-2-3.500 3.500L8 3z" fill="#fafafa" stroke="#b5b3b1"/>`)}Format painter</button></li>
          </ul>
        </div>
        <h2>Clipboard</h2>
      </section>
      <section class="group data"><div class="tools">${dataItems.map((t) => this.tool(t))}</div><h2>Data</h2></section>
      <section class="group queries"><div class="tools">${queryItems.map((t) => this.tool(t))}</div><h2>Queries</h2></section>
      <section class="group insert">
        <div class="tools">
          ${this.tool({ lines: ["New", "visual"], art: art.newVisual })}
          <div class="gallery">
            <div class="shelf">${gallery.map((g) => html`<button aria-label=${g.name}>${icon(18, g.art)}</button>`)}</div>
            <button class="more" aria-label="More visuals">${chevron}</button>
          </div>
          ${this.tool({ lines: ["Text", "box"], art: art.textBox })}
          ${this.tool({ lines: ["More", "visuals"], art: art.moreVisuals, menu: true })}
        </div>
        <h2>Insert</h2>
      </section>
      <section class="group calcs">
        <div class="tools">${this.tool({ lines: ["New", "measure"], art: art.calc })}${this.tool({ lines: ["Quick", "measure"], art: art.quick })}</div>
        <h2>Calculations</h2>
      </section>
      <section class="group sens"><div class="tools">${this.tool({ lines: ["Sensitivity", ""], art: art.sensitivity, menu: true, disabled: true })}</div><h2>Sensitivity</h2></section>
      <section class="group pub"><div class="tools">${this.tool({ lines: ["Publish"], art: art.publish })}</div><h2>Share</h2></section>
      <button class="collapse" aria-label="Collapse the ribbon">${chevron}</button>
    </div>`;
  }

  private renderReport() {
    const steps = [0, 11, 23, 34, 45, 57];
    return html`<main class="stage">
      <article class="report">
        <svg class="dots" aria-hidden="true">
          <defs><pattern id="grid" width="68" height="68" patternUnits="userSpaceOnUse">
            ${steps.map((s) => svg`<rect x=${s} y="0" width="1" height="1" fill="#333"/><rect x="0" y=${s} width="1" height="1" fill="#333"/>`)}
          </pattern></defs>
          <rect width="100%" height="100%" fill="url(#grid)"/>
        </svg>
        <aside class="side"><h3>Reset all</h3><button class="clear">Clear all slicers</button></aside>
        <div class="sheet">
          <div class="kpis">${kpis.map(([v, l]) => html`<div class="kpi"><strong>${v}</strong><span class=${l.length > 16 ? "long" : ""}>${l}</span></div>`)}</div>
          <div class="visuals">
            <div class="lists">
              <section class="list"><h3>Top 10 Customers by Sales<svg class="asc" width="6" height="3" viewBox="0 0 6 3"><path d="M3 0l3 3H0z" fill="#111"/></svg></h3>${customers.map((c) => html`<div>${c}</div>`)}</section>
              <section class="list second"><h3>Top 10 Products by Sales</h3>${products.map((c) => html`<div>${c}</div>`)}<span class="bar"></span></section>
            </div>
            <div class="pills"><button class="pill">Location</button><button class="pill last">Time</button></div>
            <div class="slicers">
              <div class="row">
                <report-slicer heading="region" searchable thumb="mid" .values=${["Select all", "Canada", "Caribbean", "Central Africa", "Central America"]}></report-slicer>
                <report-slicer heading="country" searchable thumb="short" .values=${["Select all", "Zimbabwe", "Zambia", "Yemen", "Western Sa..."]}></report-slicer>
                <report-slicer heading="city" searchable thumb="short" .values=${["Select all", "Aachen", "Aalen", "Aalst", "Aba"]}></report-slicer>
                <report-slicer heading="state" searchable thumb="short" .values=${["Select all", "Abia", "Abruzzi", "Abuja Capital Te...", "Aceh"]}></report-slicer>
              </div>
              <div class="row time">
                <report-slicer heading="Year" collapsible .values=${["Select all", "2012", "2013", "2014", "2015"]}></report-slicer>
                <report-slicer heading="Quarter" collapsible .values=${["Select all", "Qtr 1", "Qtr 2", "Qtr 3", "Qtr 4"]}></report-slicer>
                <report-slicer heading="Month" collapsible searchable thumb="long" .values=${["Select all", "January", "February", "March", "April"]}></report-slicer>
                <report-slicer heading="segment" collapsible .values=${["Select all", "Home Office", "Corporate", "Consumer"]}></report-slicer>
              </div>
            </div>
          </div>
        </div>
      </article>
    </main>`;
  }

  render() {
    return html`<div class="window">
      ${this.renderTaskbar()} ${this.renderTitle()} ${this.renderRibbon()}
      <div class="workspace">
        <nav class="views">${railViews.map((v) => html`<button aria-label=${v.name}>${icon(18, v.art)}</button>`)}</nav>
        ${this.renderReport()}
        <aside class="filters">
          <button aria-label="Expand filters">${icon(14, svg`<path d="M6.500 1L1 7l5.500 6M12.500 1L7 7l5.500 6" stroke="#252423" stroke-width="1.200"/>`)}</button>
          ${icon(14, svg`<path d="M12.500 1.500v11L7 8.500H4L1.500 5.500H7z" stroke="#252423" stroke-width="1.200" stroke-linejoin="round"/>`)}
          <h2>Filters</h2>
        </aside>
        <nav class="panes">
          ${paneIcons.map((p) => html`<button aria-label=${p.name}>${icon(18, p.art)}</button>`)}
          <button class="gear" aria-label="Settings">${icon(20, svg`<path d="M8 1.500h4l.8 2.500 1.800 1 2.600-.6 2 3.400-1.800 2.200 1.800 2.200-2 3.400-2.600-.6-1.800 1-.8 2.500H8L7.200 16l-1.800-1-2.600.6-2-3.400L2.600 10 .8 7.800l2-3.400L5.400 5l1.800-1z" stroke=${K} stroke-width="1.400" stroke-linejoin="round"/><circle cx="10" cy="10" r="3" stroke=${K} stroke-width="1.600"/>`)}</button>
        </nav>
        <nav class="tabs">
          <div class="layouts">
            <button class="on" aria-label="Desktop layout">${icon(20, svg`<path d="M.7 3.700h18.600v10.600H.7zM7 16.500h6M10 14.500v2" stroke="#484644" stroke-width="1.400"/>`)}</button>
            <button aria-label="Mobile layout">${icon(20, svg`<rect x="4" y=".7" width="12" height="18.600" rx="1" stroke="#484644" stroke-width="1.400"/><path d="M9 16.500h2" stroke="#484644" stroke-width="1.400"/>`)}</button>
            <button aria-label="Previous page">${icon(8, svg`<path d="M6 0v8L1 4z" fill="#c8c6c4"/>`)}</button>
            <button aria-label="Next page">${icon(8, svg`<path d="M2 0v8l5-4z" fill="#c8c6c4"/>`)}</button>
          </div>
          ${pageTabs.map((t, i) => html`<button class=${classMap({ tab: true, on: i === 0 })}>${t}${i === 0 ? html`<span class="x">x</span>` : nothing}</button>`)}
          <button class="add" aria-label="New page">${icon(12, svg`<path d="M6 .5v11M.5 6h11" stroke="#fff" stroke-width="3"/>`)}</button>
        </nav>
      </div>
      <footer class="status">
        <span>Page 1 of 6</span>
        <div class="zoom">
          <button aria-label="Zoom out">-</button>
          <input type="range" min="0" max="100" value="33" aria-label="Zoom" />
          <button aria-label="Zoom in">+</button>
          <span class="pct">71%</span>
          <button aria-label="Fit to page">${icon(16, svg`<path d="M.5 2.500h15v11H.500z" stroke="#605e5c"/><path d="M3 6V4.500h2.500M10.500 4.500H13V6M3 10v1.500h2.500M10.500 11.500H13V10" stroke="#605e5c"/>`)}</button>
        </div>
      </footer>
    </div>`;
  }
}
